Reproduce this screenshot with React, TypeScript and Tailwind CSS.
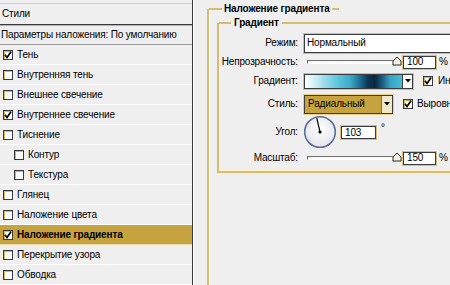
import React from "react";

function Check({ checked }: { checked?: boolean }) {
  return (
    <span className="w-[10px] h-[10px] border border-[#3a3a3a] bg-white shadow-[inset_1px_1px_0_#d7b550] flex items-center justify-center shrink-0">
      {checked && (
        <svg width="8" height="8" viewBox="0 0 8 8">
          <path d="M1 3.8 L3 6.5 L7 0.8" fill="none" stroke="#000" strokeWidth="1.7" />
        </svg>
      )}
    </span>
  );
}

const items: { t: string; c?: boolean; indent?: boolean; active?: boolean }[] = [
  { t: "Тень", c: true },
  { t: "Внутренняя тень" },
  { t: "Внешнее свечение" },
  { t: "Внутреннее свечение", c: true },
  { t: "Тиснение" },
  { t: "Контур", indent: true },
  { t: "Текстура", indent: true },
  { t: "Глянец" },
  { t: "Наложение цвета" },
  { t: "Наложение градиента", c: true, active: true },
  { t: "Перекрытие узора" },
  { t: "Обводка" },
];

function Slider() {
  return (
    <div className="relative w-[94px] h-[12px] flex items-center shrink-0">
      <div className="ml-[3px] w-[90px] h-[4px] border-t border-l border-[#6f6f6f] border-b border-b-white bg-[#f8f8f8]" />
      <svg className="absolute left-[88px] top-[0px]" width="10" height="10" viewBox="0 0 10 10">
        <polygon points="1,9 1,5 5,1 9,5 9,9" fill="#f4efdf" stroke="#2c2c2c" strokeWidth="1" />
      </svg>
    </div>
  );
}

function NumBox({ v, w = "w-[33px]" }: { v: string; w?: string }) {
  return (
    <div className={`${w} h-[13px] bg-white border border-[#3c3c3c] shadow-[0_0_0_1px_#d9c07a] flex items-center pl-[3px] leading-none shrink-0`}>
      {v}
    </div>
  );
}

function Label({ children }: { children: React.ReactNode }) {
  return <div className="w-[80px] text-right shrink-0 pr-[1px]">{children}</div>;
}

export default function App() {
  return (
    <div
      className="w-[450px] h-[285px] overflow-hidden bg-[#efefef] flex text-[10px] tracking-[-0.15px] text-black leading-none whitespace-nowrap"
      style={{ fontFamily: '"Liberation Sans", Arial, sans-serif' }}
    >
      {/* Left panel */}
      <div className="w-[193px] shrink-0 flex flex-col border-r border-[#3a3a3a] pt-[3px] shadow-[1px_0_0_#ffffff]">
        <div className="h-[23px] border-t border-[#e2cf8f] border-b border-b-[#3a3a3a] flex items-center pl-[2px]">
          Стили
        </div>
        <div className="h-[20px] border-t border-[#d2b25a] border-b border-b-[#9c9c9c] flex items-center pl-[1px]">
          Параметры наложения: По умолчанию
        </div>
        {items.map((it) => (
          <div
            key={it.t}
            className={`h-[20px] shrink-0 flex items-center gap-[4px] border-b ${
              it.active ? "bg-[#c6a33f] border-[#e9d9a6] font-bold" : "border-white"
            } ${it.indent ? "pl-[14px]" : "pl-[3px]"}`}
          >
            <Check checked={it.c} />
            <span>{it.t}</span>
          </div>
        ))}
      </div>

      {/* Right panel */}
      <div className="flex-1 min-w-0">
        <div className="ml-[14px] mt-[9px] h-[300px] border-l-2 border-[#d8bc6f] shadow-[inset_1px_0_0_#ffffff] flex flex-col">
          <div className="flex items-center -mt-[8px] h-[16px]">
            <div className="w-[13px] h-[2px] bg-[#d8bc6f]" />
            <span className="px-[2px] font-bold">Наложение градиента</span>
            <div className="w-[7px] h-[2px] bg-[#d8bc6f]" />
          </div>

          <div className="ml-[8px] mt-[6px] w-[260px] border-l-2 border-b-2 border-[#d8bc6f] shadow-[inset_1px_-1px_0_#fff4cc] flex flex-col pb-[5px]">
            <div className="flex items-center -mt-[8px] h-[16px]">
              <div className="w-[12px] h-[2px] bg-[#d8bc6f]" />
              <span className="px-[3px] font-bold">Градиент</span>
              <div className="flex-1 h-[2px] bg-[#d8bc6f]" />
            </div>

            {/* Режим */}
            <div className="mt-[2px] h-[20px] flex items-center gap-[5px]">
              <Label>Режим:</Label>
              <div className="w-[170px] h-[19px] bg-white border border-[#3c3c3c] shadow-[0_0_0_1px_#d9c07a] flex items-center pl-[2px] shrink-0">
                Нормальный
              </div>
            </div>

            {/* Непрозрачность */}
            <div className="h-[18px] flex items-center gap-[5px]">
              <Label>Непрозрачность:</Label>
              <Slider />
              <NumBox v="100" />
              <span className="-ml-[2px]">%</span>
            </div>

            {/* Градиент */}
            <div className="h-[20px] flex items-center gap-[5px]">
              <Label>Градиент:</Label>
              <div className="w-[109px] h-[15px] border border-[#3c3c3c] shadow-[0_0_0_1px_#d9c07a] flex shrink-0">
                <div
                  className="flex-1"
                  style={{
                    background:
                      "linear-gradient(to right, #ffffff 0%, #d9f3f9 8%, #9bdcec 20%, #5cc5dd 34%, #3aa9c8 47%, #1a6b8f 57%, #0d3553 65%, #0a2641 72%, #1b5f81 80%, #38a5c5 88%, #46bdd7 100%)",
                  }}
                />
                <div className="w-[10px] bg-white border-l border-[#3c3c3c] flex items-center justify-center">
                  <svg width="6" height="4" viewBox="0 0 6 4">
                    <polygon points="0,0 6,0 3,3.5" fill="#000" />
                  </svg>
                </div>
              </div>
              <div className="ml-[5px] flex items-center gap-[5px] shrink-0">
                <Check checked />
                <span>Инверсия</span>
              </div>
            </div>

            {/* Стиль */}
            <div className="mt-[3px] h-[20px] flex items-center gap-[5px]">
              <Label>Стиль:</Label>
              <div className="w-[89px] h-[19px] border border-[#3c3c3c] shadow-[0_0_0_1px_#e6d08a] bg-[#c6a33f] flex shrink-0">
                <div className="flex-1 flex items-center pl-[3px]">Радиальный</div>
                <div className="w-[11px] bg-[#f1e7c6] border-l border-[#8a7530] flex items-center justify-center">
                  <svg width="6" height="4" viewBox="0 0 6 4">
                    <polygon points="0,0 6,0 3,3.5" fill="#000" />
                  </svg>
                </div>
              </div>
              <div className="ml-[5px] flex items-center gap-[4px] shrink-0">
                <Check checked />
                <span>Выровнять по слою</span>
              </div>
            </div>

            {/* Угол */}
            <div className="h-[36px] flex items-center gap-[4px]">
              <Label>Угол:</Label>
              <svg width="34" height="34" viewBox="0 0 34 34" className="shrink-0">
                <defs>
                  <radialGradient id="dial" cx="50%" cy="40%" r="60%">
                    <stop offset="0%" stopColor="#ffffff" />
                    <stop offset="100%" stopColor="#e4e4ea" />
                  </radialGradient>
                </defs>
                <circle cx="17" cy="17" r="15.3" fill="url(#dial)" stroke="#5a6e98" strokeWidth="1.6" />
                <line x1="17" y1="17" x2="13.8" y2="3.2" stroke="#000" strokeWidth="1.2" />
                <circle cx="17" cy="17" r="1.6" fill="#000" />
              </svg>
              <div className="self-start mt-[12px]">
                <NumBox v="103" w="w-[35px]" />
              </div>
              <span className="self-start mt-[9px] ml-[1px]">°</span>
            </div>

            {/* Масштаб */}
            <div className="h-[16px] flex items-center gap-[5px]">
              <Label>Масштаб:</Label>
              <Slider />
              <NumBox v="150" />
              <span className="-ml-[2px]">%</span>
            </div>
          </div>
        </div>
      </div>
    </div>
  );
}
